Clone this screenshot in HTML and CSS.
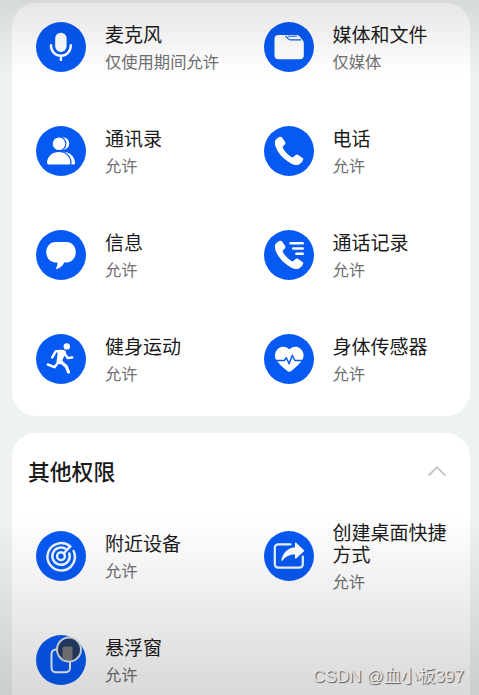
FILE: index.html
```html
<!DOCTYPE html>
<html lang="zh-CN">
<head>
  <meta charset="UTF-8">
  <meta name="viewport" content="width=device-width, initial-scale=1.0">
  <title>权限</title>
  <link rel="stylesheet" href="styles.css">
</head>
<body>
  <section class="card">
    <div class="grid">
      <div class="item">
        <svg class="icon" viewBox="0 0 50 50">
          <rect class="fill" x="19.2" y="10.7" width="11.4" height="19.2" rx="5.7"/>
          <path class="line" stroke-width="2.4" d="M15 23.2v.6a9.9 9.9 0 0 0 19.8 0v-.6M24.9 33.7v4.2"/>
        </svg>
        <div class="text"><div class="name">麦克风</div><div class="state">仅使用期间允许</div></div>
      </div>
      <div class="item">
        <svg class="icon" viewBox="0 0 50 50">
          <path class="fill" d="M14.5 13h17.8c1.600 0 2.700.5 3.700 1.700l2.700 3.500c.8 1 1.100 1.900 1.100 3.200v11.900a4 4 0 0 1-4 4H14.500a4 4 0 0 1-4-4V17a4 4 0 0 1 4-4z"/>
          <path class="blue-line" stroke-width="1.100" d="M21.500 13.800l3 3.200c.6.700 1.100.9 2 .9h10.500M24 14.200h9"/>
        </svg>
        <div class="text"><div class="name">媒体和文件</div><div class="state">仅媒体</div></div>
      </div>
      <div class="item">
        <svg class="icon" viewBox="0 0 50 50">
          <circle class="fill" cx="27" cy="17.5" r="6.2"/>
          <path class="fill" d="M27 25.7c7 0 12 5.3 12 11.2 0 1-.5 1.6-1.5 1.6H24z"/>
          <circle class="fill cut" cx="23" cy="17.7" r="6.9"/>
          <path class="fill cut" d="M22.7 25.4c7.3 0 12.3 5.3 12.3 11.4 0 1.6-.6 2.2-2 2.2H12.5c-1.500 0-2.100-.7-2.100-2.200 0-6.100 5-11.400 12.300-11.400z"/>
        </svg>
        <div class="text"><div class="name">通讯录</div><div class="state">允许</div></div>
      </div>
      <div class="item">
        <svg class="icon" viewBox="0 0 50 50">
          <path class="fill" d="M15.3 11c1.2-.6 2.2-.3 3 .8l2.700 3.900c.7 1 .6 2-.2 2.900l-1.500 1.500c-.7.8-.7 1.400-.2 2.300 1.900 3.300 4.900 6.300 8.300 8.500.9.6 1.600.5 2.300-.2l1.600-1.500c.9-.8 1.800-.9 2.800-.2l4.200 2.700c1 .7 1.300 1.700.6 2.800-1.200 2-2.900 3.900-5.200 4.500-3.600.9-10.700-3.200-15.800-8.500-4.500-4.700-7.400-10.800-7-14.500.3-2.400 2.200-3.900 4.400-5z"/>
        </svg>
        <div class="text"><div class="name">电话</div><div class="state">允许</div></div>
      </div>
      <div class="item">
        <svg class="icon" viewBox="0 0 50 50">
          <path class="fill" d="M19.5 12h11c5.500 0 9.300 4.500 9.300 10.200s-3.800 10.300-9.300 10.300h-2.300c-1.300 3-4 5.600-7.200 6.500-1 .2-1.300-.6-.8-1.300.9-1.400 1.400-3.200 1.200-5.200h-1.900c-5.500 0-9.200-4.600-9.200-10.300S14 12 19.500 12z"/>
        </svg>
        <div class="text"><div class="name">信息</div><div class="state">允许</div></div>
      </div>
      <div class="item">
        <svg class="icon" viewBox="0 0 50 50">
          <path class="fill" d="M15.3 11c1.2-.6 2.2-.3 3 .8l2.700 3.900c.7 1 .6 2-.2 2.900l-1.500 1.500c-.7.8-.7 1.400-.2 2.300 1.900 3.300 4.900 6.300 8.300 8.500.9.6 1.600.5 2.300-.2l1.600-1.500c.9-.8 1.800-.9 2.800-.2l4.200 2.700c1 .7 1.300 1.700.6 2.800-1.200 2-2.900 3.900-5.200 4.500-3.600.9-10.700-3.200-15.800-8.500-4.500-4.700-7.400-10.800-7-14.500.3-2.400 2.200-3.900 4.400-5z"/>
          <path class="line" stroke-width="2.4" d="M26.500 13.300h12.300M29.200 18.500h9.600M32.300 23.700h6.500"/>
        </svg>
        <div class="text"><div class="name">通话记录</div><div class="state">允许</div></div>
      </div>
      <div class="item">
        <svg class="icon" viewBox="0 0 50 50">
          <circle class="fill" cx="30.8" cy="12.4" r="3.2"/>
          <path class="line" stroke-width="2.5" d="M26 17l-6.300.3-3.500 6.200M28.500 19.500l3.200 4.500 4.500-.5M22.500 28l-4 5.200-6.700-2.700"/>
          <path class="line" stroke-width="3.200" d="M24 27l6.300 5.500 2.200 5.500"/>
          <path class="fill" d="M22 16.300l5.800-.3c2 .2 2.800 2 1.800 3.800l-3.300 6.400 1 2.500-3.500 1.800-3.300-2.500z"/>
        </svg>
        <div class="text"><div class="name">健身运动</div><div class="state">允许</div></div>
      </div>
      <div class="item">
        <svg class="icon" viewBox="0 0 50 50">
          <path class="fill" d="M25.300 15.600c3-3.700 8-3.400 11-1.200 3.500 2.700 4.600 8.100 1.500 12.300-2.700 3.700-7 7.400-10.600 10.300-1.300 1-2.500 1-3.800 0-3.600-2.900-8-6.600-10.600-10.300-3.100-4.200-2-9.600 1.500-12.300 3-2.200 8-2.500 11 1.200z"/>
          <path class="blue-line" stroke-width="1.500" d="M11 26.500h9.300l2-2.800 2.800 6 3.200-8.500 2.500 5.300H40"/>
        </svg>
        <div class="text"><div class="name">身体传感器</div><div class="state">允许</div></div>
      </div>
    </div>
  </section>

  <section class="card other">
    <div class="head">
      <h2>其他权限</h2>
      <svg class="arrow" viewBox="0 0 18 10"><path d="M1.200 9L9 1.200 16.800 9"/></svg>
    </div>
    <div class="grid">
      <div class="item">
        <svg class="icon" viewBox="0 0 50 50">
          <g class="soft">
            <path stroke-width="2.5" d="M34.200 15.500A13.700 13.700 0 1 0 37.600 20"/>
            <path stroke-width="2.5" d="M29.500 17.700A8.700 8.700 0 1 0 33.300 22.500"/>
            <circle stroke-width="2.5" cx="25" cy="25.200" r="3.900"/>
            <path stroke-width="2.5" d="M27.800 22.400l6.400-6.900"/>
          </g>
        </svg>
        <div class="text"><div class="name">附近设备</div><div class="state">允许</div></div>
      </div>
      <div class="item">
        <svg class="icon" viewBox="0 0 50 50">
          <g class="soft">
            <path stroke-width="2.2" d="M26.500 13.300H14.200a3.400 3.400 0 0 0-3.400 3.400v16.500a3.400 3.400 0 0 0 3.400 3.400h21.200a3.400 3.400 0 0 0 3.400-3.400v-7.500"/>
          </g>
          <path class="fill" d="M31 12.200c0-.7.7-1 1.200-.5l7.500 7.200c.6.5.6 1 0 1.500l-7.500 7c-.5.5-1.200.2-1.200-.5v-3.500c-5.500-.2-9.700 2.200-12.500 6.200-.5.7-1.400.4-1.200-.5 1.500-7 6.300-12 13.700-12.800z"/>
        </svg>
        <div class="text"><div class="name">创建桌面快捷方式</div><div class="state">允许</div></div>
      </div>
      <div class="item">
        <svg class="icon" viewBox="0 0 50 50">
          <g class="soft"><rect stroke-width="2" x="15.500" y="14.500" width="18.500" height="22.800" rx="4.500"/></g>
          <circle class="touch" cx="33" cy="14.500" r="12"/>
          <rect class="pane" x="26.500" y="11.500" width="10" height="13.500" rx="2"/>
        </svg>
        <div class="text"><div class="name">悬浮窗</div><div class="state">允许</div></div>
      </div>
    </div>
  </section>

  <div class="shade"></div>
  <div class="watermark">CSDN @血小板397</div>
</body>
</html>
```
FILE: styles.css
```css
* {
  box-sizing: border-box;
}
body {
  margin: 0;
  height: 695px;
  overflow: hidden;
  position: relative;
  padding: 3px 9px 0 12px;
  background-color: #eef2f1;
  color: #1a1a1a;
  font-family: "Noto Sans CJK SC", sans-serif;
}
.card {
  background-color: #fff;
  border-radius: 24px;
  height: 413px;
  padding-top: 10px;
  margin-bottom: 17px;
}
.other {
  height: 262px;
  margin-bottom: 0;
  border-radius: 24px 24px 0 0;
  overflow: hidden;
}
.grid {
  display: grid;
  grid-template-columns: 227.5px 1fr;
  grid-auto-rows: 70px;
  row-gap: 34px;
  padding-left: 24px;
}
.item {
  display: flex;
  align-items: center;
}
.icon {
  width: 50px;
  height: 50px;
  margin: 0 19px 2px 0;
  border-radius: 50%;
  background-color: #0659f3;
  overflow: visible;
  flex-shrink: 0;
}
.text {
  padding-bottom: 2px;
}
.name {
  width: 120px;
  font-size: 19px;
  line-height: 22px;
}
.state {
  margin-top: 6px;
  font-size: 16.3px;
  line-height: 20px;
  color: #707070;
}
.fill {
  fill: #fff;
}
.cut {
  stroke: #0659f3;
  stroke-width: 1.2;
}
.line {
  fill: none;
  stroke: #fff;
  stroke-linecap: round;
  stroke-linejoin: round;
}
.blue-line {
  fill: none;
  stroke: #0659f3;
  stroke-linejoin: round;
}
.soft {
  fill: none;
  stroke: #edf7ff;
  stroke-linecap: round;
}
.touch {
  fill: #263c66;
  stroke: #dce5ea;
  stroke-width: 2;
}
.pane {
  fill: #77797a;
}
.head {
  display: flex;
  align-items: center;
  justify-content: space-between;
  height: 56px;
  margin-bottom: 23px;
  padding: 0 24px 0 16px;
}
.head h2 {
  margin: 0;
  padding-bottom: 2px;
  font-size: 21.8px;
  font-weight: 500;
}
.arrow {
  width: 18px;
  height: 10px;
}
.arrow path {
  fill: none;
  stroke: #c4c4c4;
  stroke-width: 1.8;
  stroke-linecap: round;
}
.shade {
  position: absolute;
  inset: 0;
  background: linear-gradient(rgba(0, 0, 0, 0.1), rgba(0, 0, 0, 0) 75px, rgba(0, 0, 0, 0) 515px, rgba(0, 0, 0, 0.075) 605px, rgba(0, 0, 0, 0.15));
}
.watermark {
  position: absolute;
  right: 15px;
  bottom: 7px;
  font: 17.2px/24px "Liberation Sans", "Noto Sans CJK SC", sans-serif;
  color: #e6e6e6;
  text-shadow: 1px 1px 1px #555;
}
```
